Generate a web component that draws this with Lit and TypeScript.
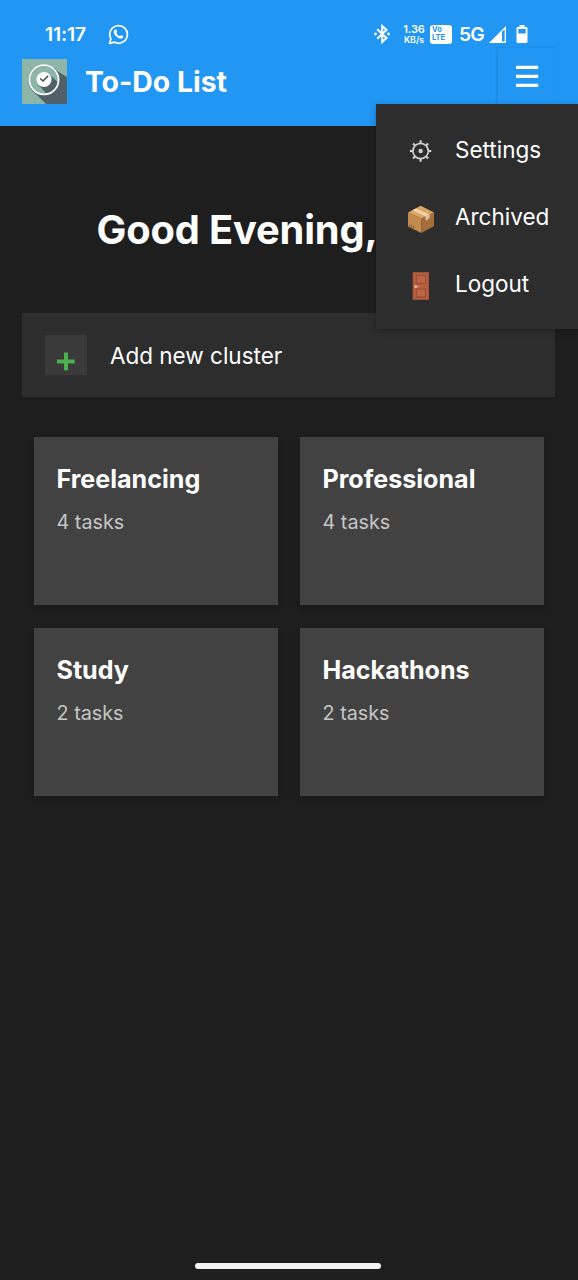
import { LitElement, html, svg, css } from "lit";
import { customElement, property, state } from "lit/decorators.js";

const gearTeeth = [0, 45, 90, 135, 180, 225, 270, 315];

const icons = {
  settings: html`<svg class="glyph" viewBox="0 0 28 28" width="28" height="28">
    <g fill="none" stroke="#cecece" stroke-width="1.700">
      <circle cx="13.600" cy="14" r="7.700" />
      ${gearTeeth.map((a) => svg`<path d="M13.600 6.600V3.300" stroke-width="2.200" transform="rotate(${a} 13.600 14)" />`)}
    </g>
    <circle cx="13.600" cy="14" r="2.200" fill="#cecece" />
  </svg>`,
  archived: html`<svg class="glyph" viewBox="0 0 28 28" width="28" height="28">
    <path d="M1 7.6 14.2 13.4V28L1 21.4Z" fill="#c28a4c" />
    <path d="M14.2 13.4 27 7.6V21.2L14.2 28Z" fill="#a66d39" />
    <path d="M1 7.6 13.7.7 27 7.6 14.2 13.4Z" fill="#d9a565" />
    <path d="M5.3 5.3 8.8 3.4 22.7 9.5 18.5 11.5Z" fill="#f0d2a4" />
    <path d="M18.5 11.5 22.7 9.5V13.6L21.3 13.4 20 15.2 18.5 15Z" fill="#dfc0a4" />
    <path d="M2.800 19.600v2M4.700 20.400v2.100M6.600 21.300v2.100" stroke="#704925" stroke-width=".8" />
  </svg>`,
  logout: html`<svg class="glyph" viewBox="0 0 28 28" width="28" height="28">
    <rect x="5.800" y=".4" width="16" height="27.2" fill="#b9603f" />
    <rect x="6.300" y=".9" width="15" height="26.2" fill="none" stroke="#a8563c" />
    <g fill="#bd6444" stroke="#954b34" stroke-width="1">
      <rect x="9.300" y="3.4" width="9.3" height="8.2" />
      <rect x="9.300" y="17" width="9.3" height="8" />
    </g>
    <circle cx="8.800" cy="14.5" r="1.3" fill="#ead5c8" />
    <path d="M10 14.7h2.600" stroke="#d09078" stroke-width="1" />
  </svg>`,
};

@customElement("status-bar")
class StatusBar extends LitElement {
  static styles = css`
    :host { display: flex; align-items: center; height: 28px; padding: 20px 50.500px 0 45px; color: #fff; }
    .time { width: 63px; font-size: 19.200px; font-weight: 600; line-height: 28px; letter-spacing: -0.1px; }
    .right { display: flex; align-items: center; margin-left: auto; }
    .rate { width: 23px; margin-left: 13px; white-space: nowrap; display: flex; flex-direction: column; align-items: center; }
    .num { font-size: 11px; line-height: 11px; font-weight: 600; letter-spacing: -0.1px; }
    .unit { font-size: 8.800px; line-height: 10px; font-weight: 600; }
    .volte { width: 22px; height: 19px; box-sizing: border-box; margin-left: 4.500px; padding: 1px 0 0 2px; border-radius: 3px; background: #fff; color: #2196f3; font-size: 7.5px; font-weight: 700; line-height: 8.3px; }
    .net { width: 25px; margin-left: 7px; font-size: 19.300px; font-weight: 600; line-height: 28px; letter-spacing: -0.900px; }
    .signal { margin-left: 4.500px; }
    .battery { margin-left: 10px; }
  `;
  render() {
    return html`
      <span class="time">11:17</span>
      <svg viewBox="0 0 21 21" width="21" height="21">
        <path d="M1.6 19.4 2.9 14.7A8.8 8.8 0 1 1 6.3 18.1Z" fill="none" stroke="#fff" stroke-width="1.7" stroke-linejoin="round" />
        <path d="M7.3 5.4c.5-.2.9 0 1.1.5l.7 1.7c.1.4-.6 1-.8 1.4.8 1.6 1.9 2.6 3.5 3.3.5-.3 1-1.3 1.5-1.1l1.7.8c.7.4.1 1.5-.5 2-1 .8-2.500.6-3.800 0-2.200-1-4.100-2.900-4.800-5-.5-1.600.2-3.100 1.400-3.600Z" fill="#fff" />
      </svg>
      <div class="right">
        <svg viewBox="0 0 16 20" width="16" height="20">
          <path d="M3.200 5.200 12.500 14 8.200 18V2L12.500 6 3.200 14.800" fill="none" stroke="#fff" stroke-width="2" />
          <circle cx="1.500" cy="10" r="1.400" fill="#fff" /><circle cx="14.500" cy="10" r="1.400" fill="#fff" />
        </svg>
        <div class="rate"><span class="num">1.36</span><span class="unit">KB/s</span></div>
        <div class="volte">Vo<br />LTE</div>
        <span class="net">5G</span>
        <svg class="signal" viewBox="0 0 17 17" width="17" height="17">
          <path d="M17 0V17H0Z" fill="#fff" /><path d="M13 5.800 15.600 3.200V15.600H13Z" fill="#2196f3" />
        </svg>
        <svg class="battery" viewBox="0 0 12 18" width="12" height="18">
          <path d="M3.500 0h5v2H10.300Q11.500 2 11.500 3.200V16.600Q11.500 18 10.300 18H1.700Q.5 18 .5 16.600V3.200Q.5 2 1.700 2H3.500Z" fill="#fff" />
          <rect x="2.300" y="4" width="7.400" height="4.500" fill="#2196f3" />
        </svg>
      </div>
    `;
  }
}

@customElement("cluster-card")
class ClusterCard extends LitElement {
  @property() name = "";
  @property({ type: Number }) count = 0;
  static styles = css`
    :host { display: block; box-sizing: border-box; padding: 24px 22.500px; background: #424242; box-shadow: 0 3px 6px rgba(0, 0, 0, 0.2); }
    .name { margin: 0; color: #fff; font-size: 25.100px; font-weight: 700; line-height: 36px; white-space: nowrap; }
    .count { margin: 10px 0 0; color: #c6c6c6; font-size: 19.800px; line-height: 30px; }
  `;
  render() {
    return html`<h2 class="name">${this.name}</h2><p class="count">${this.count} tasks</p>`;
  }
}

@customElement("app-root")
class AppRoot extends LitElement {
  @state() menuOpen = true;

  clusters = [
    { name: "Freelancing", count: 4 },
    { name: "Professional", count: 4 },
    { name: "Study", count: 2 },
    { name: "Hackathons", count: 2 },
  ];
  menu = [
    { label: "Settings", icon: icons.settings },
    { label: "Archived", icon: icons.archived },
    { label: "Logout", icon: icons.logout },
  ];

  static styles = css`
    :host { display: flex; flex-direction: column; position: relative; height: 1280px; overflow: hidden; background: #1e1e1e; color: #fff; font-family: Inter, "Liberation Sans", sans-serif; }
    .header { height: 126px; background: #2196f3; }
    .appbar { display: flex; align-items: flex-start; padding: 0 23px 0 22.400px; }
    .logo { margin-top: 11px; }
    .title { margin: 14px 0 0 17.500px; font-size: 28.400px; font-weight: 700; line-height: 40px; white-space: nowrap; }
    .toggle { width: 57px; height: 57px; margin-left: auto; padding: 0; border: 0; background: #2196f3; box-shadow: -1px 0 3px rgba(0, 0, 0, 0.1); }
    .menu { position: absolute; z-index: 2; top: 104px; right: 0; width: 202px; height: 224.500px; box-sizing: border-box; padding: 12px 0 0; background: #2d2d2d; box-shadow: 0 2px 6px rgba(0, 0, 0, 0.250); }
    .item { display: flex; align-items: center; height: 67.400px; padding-left: 31px; }
    .glyph { flex: none; margin: 3px 20px 0 0; }
    .label { font-size: 22.500px; line-height: 32px; }
    .greeting { margin: 79px 0 0 96.500px; font-size: 39.800px; font-weight: 700; line-height: 50px; letter-spacing: -0.150px; white-space: nowrap; }
    .add { display: flex; align-items: center; height: 84px; margin: 58px 23px 0 22.400px; padding-left: 22.500px; background: #2d2d2d; }
    .plus { display: flex; width: 42px; height: 40px; background: #3a3a3a; }
    .addtext { margin-left: 23px; padding-top: 1px; font-size: 22.500px; line-height: 32px; }
    .grid { display: grid; grid-template-columns: 244px 244px; grid-auto-rows: 168px; gap: 23px 22px; margin: 40px 0 0 34px; }
    .home { width: 186px; height: 6px; margin: auto auto 11px 195px; border-radius: 3px; background: #f4f4f4; }
  `;

  render() {
    return html`
      <header class="header">
        <status-bar></status-bar>
        <div class="appbar">
          <svg class="logo" viewBox="0 0 45 45" width="45" height="45">
            <rect width="45" height="45" fill="#8db6a8" />
            <path d="M32.500 10.500 45 18V45H24L11 32Z" fill="#505f68" />
            <circle cx="22" cy="21" r="14.600" fill="#8db6a8" />
            <path d="M27 15 36 23.500A14.500 14.500 0 0 1 25 35.300L16.500 26Z" fill="#505f68" />
            <circle cx="22.400" cy="21.400" r="15.200" fill="none" stroke="#50646a" stroke-width="1.500" />
            <circle cx="22" cy="20.800" r="14.600" fill="none" stroke="#fff" stroke-width="1.700" />
            <circle cx="22" cy="20.500" r="7.600" fill="#fff" />
            <path d="M18.300 19.500 21 22 26.200 16.800" fill="none" stroke="#3e4b50" stroke-width="1.500" />
          </svg>
          <h1 class="title">To-Do List</h1>
          <button class="toggle" aria-label="Menu" @click=${() => (this.menuOpen = !this.menuOpen)}>
            <svg viewBox="0 0 57 57" width="57" height="57">
              <path d="M18 19.300H40.200M18 28.300H40.200M18 37.300H40.200" stroke="#fff" stroke-width="3.300" />
            </svg>
          </button>
        </div>
      </header>
      ${this.menuOpen
        ? html`<nav class="menu">
            ${this.menu.map((m) => html`<div class="item">${m.icon}<span class="label">${m.label}</span></div>`)}
          </nav>`
        : null}
      <h2 class="greeting">Good Evening,</h2>
      <div class="add">
        <div class="plus">
          <svg viewBox="0 0 42 40" width="42" height="40"><path d="M12 26.500H29.700M21 17.500V35.200" stroke="#4caf50" stroke-width="4" /></svg>
        </div>
        <span class="addtext">Add new cluster</span>
      </div>
      <main class="grid">
        ${this.clusters.map((c) => html`<cluster-card .name=${c.name} .count=${c.count}></cluster-card>`)}
      </main>
      <div class="home"></div>
    `;
  }
}
